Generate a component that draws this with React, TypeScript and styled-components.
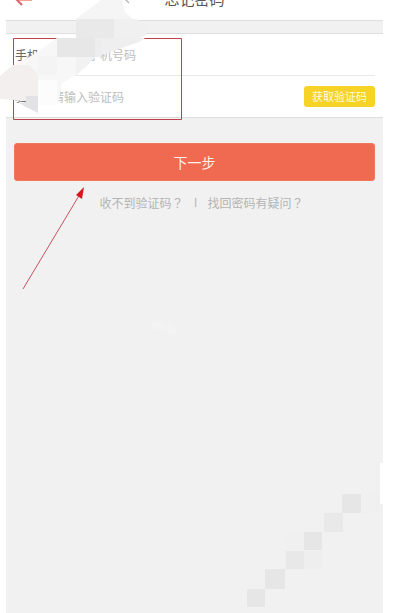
import React from "react";
import styled, { createGlobalStyle } from "styled-components";

const GlobalStyle = createGlobalStyle`
  * { box-sizing: border-box; }
  html, body { margin: 0; background: #fff; }
  body, input, button { font-family: "Noto Sans CJK SC", sans-serif; }
`;

const Screen = styled.main`
  display: flex;
  flex-direction: column;
  min-height: 100vh;
  margin: 0 19px 0 6px;
  background: #f1f1f1;
  overflow: hidden;
`;

const Header = styled.header`
  display: flex;
  align-items: flex-end;
  justify-content: center;
  height: 21px;
  padding-bottom: 9px;
  background: #fff;
  border-bottom: 1px solid #dedede;
`;

const Title = styled.h1`
  margin: 0;
  font-size: 15px;
  line-height: 24px;
  font-weight: 400;
  color: #555;
`;

const Form = styled.form`
  display: flex;
  flex-direction: column;
`;

const Fields = styled.div`
  margin-top: 12px;
  background: #fff;
  border: solid #dedede;
  border-width: 1px 0;
`;

const Row = styled.div<{ $divided?: boolean }>`
  display: flex;
  align-items: center;
  height: ${(p) => (p.$divided ? 42 : 41)}px;
  margin: 0 8px 0 9px;
  border-bottom: ${(p) => (p.$divided ? "1px solid #e9e9e9" : "0")};
`;

const Label = styled.label`
  width: 37px;
  flex: none;
  overflow: hidden;
  white-space: nowrap;
  font-size: 12px;
  color: #666;
`;

const Input = styled.input`
  flex: 1;
  min-width: 0;
  padding: 0;
  border: 0;
  outline: 0;
  background: transparent;
  font-size: 12px;
  color: #555;
  &::placeholder { color: #bdbdbd; opacity: 1; }
`;

const CodeButton = styled.button`
  flex: none;
  width: 71px;
  height: 21px;
  padding: 0;
  border: 0;
  border-radius: 3px;
  background: #f7d227;
  color: #fffbe0;
  font-size: 11px;
  line-height: 21px;
`;

const NextButton = styled.button`
  height: 38px;
  margin: 25px 8px 0;
  padding: 0;
  border: 1px solid #f1775d;
  border-radius: 3px;
  background: #ef6a50;
  color: #fff0e8;
  font-size: 14px;
`;

const Help = styled.nav`
  display: flex;
  justify-content: center;
  gap: 10px;
  margin-top: 12px;
  padding-left: 14px;
  font-family: "Noto Sans CJK TC", "Noto Sans CJK SC", sans-serif;
  font-size: 12px;
  line-height: 20px;
  color: #b4b4b4;
`;

const HelpLink = styled.a`
  color: inherit;
  text-decoration: none;
`;

const Divider = styled.span`
  width: 4px;
  text-align: center;
  font-family: "Liberation Sans", sans-serif;
`;

const Overlay = styled.svg`
  position: absolute;
  top: 0;
  left: 0;
  pointer-events: none;
`;

const tiles = [
  [342, 494, 19, "#e6e6e6"],
  [324, 513, 19, "#e9e9e9"],
  [304, 532, 18, "#e6e6e6"],
  [286, 551, 18, "#e8e8e8"],
  [265, 569, 20, "#e6e6e6"],
  [247, 589, 18, "#e6e6e6"],
  [361, 494, 19, "#f0f0f0"],
  [304, 551, 18, "#eeeeee"],
  [286, 532, 18, "#f0f0f0"],
] as const;

function Markup() {
  return (
    <Overlay width="402" height="613" viewBox="0 0 402 613" aria-hidden="true">
      <path d="M18 0h14" stroke="#f0a48f" strokeWidth="2" />
      <path d="M15 -2 22 5" stroke="#d9646a" strokeWidth="2" />
      <path d="M129 3l-5-5" stroke="#bbb" strokeWidth="1.500" />
      <path d="M13.500 38.500H181.500V119.500H13.500Z" fill="none" stroke="#c2404c" />
      <path d="M101 0h21l3 12 8 7H76z" fill="#f5f5f5" />
      <path d="M57 38 34 54 26 59 14 65v35h24l20 5 4-22 14-8 18-17 6-7V38z" fill="#f7f7f7" />
      <path d="M38 80h19v25H38z" fill="#fcfcfc" />
      <path d="M76 57h19l-9 10-10 8z" fill="#f2f2f2" />
      <path d="M0 76l13-11h16l9 9v25l-12 2-12-1-14-1z" fill="#f3efee" />
      <path d="M38 56h19v19H38z" fill="#f4f4f4" />
      <path d="M26 96h12v17l-12-6-7-4 7-1z" fill="#e3e3e5" />
      <path d="M95 38h50l-6 4-25 9-15 5h-4z" fill="#efefef" />
      <path d="M114 19h22l10 6v10l-6 3h-26z" fill="#f0f0f0" />
      <path d="M76 19h38v19H76z" fill="#e9e9e9" />
      <path d="M57 38h38v19H57z" fill="#e7e7e7" />
      <path d="M95 38h6v19h-6z" fill="#ededed" />
      <path d="M23 289 80 194" stroke="#c35361" />
      <path d="M84 187 76 195 82 199Z" fill="#d9161f" />
      {tiles.map(([x, y, size, color]) => (
        <rect key={`${x}-${y}`} x={x} y={y} width={size} height={size} fill={color} />
      ))}
      <path d="M152 322h12v8h-12zM168 321h4v6h4v8h-8z" fill="#f3f3f3" />
      <path d="M380 463h22v41h-22z" fill="#fff" />
    </Overlay>
  );
}

export default function App() {
  return (
    <>
      <GlobalStyle />
      <Screen>
        <Header><Title>忘记密码</Title></Header>
        <Form onSubmit={(e) => e.preventDefault()}>
          <Fields>
            <Row $divided>
              <Label htmlFor="phone">手机</Label>
              <Input id="phone" type="tel" placeholder="请输入手机号码" />
            </Row>
            <Row>
              <Label htmlFor="code">验</Label>
              <Input id="code" placeholder="请输入验证码" />
              <CodeButton type="button">获取验证码</CodeButton>
            </Row>
          </Fields>
          <NextButton type="submit">下一步</NextButton>
        </Form>
        <Help>
          <HelpLink href="#code-help">收不到验证码？</HelpLink>
          <Divider>l</Divider>
          <HelpLink href="#password-help">找回密码有疑问？</HelpLink>
        </Help>
      </Screen>
      <Markup />
    </>
  );
}
